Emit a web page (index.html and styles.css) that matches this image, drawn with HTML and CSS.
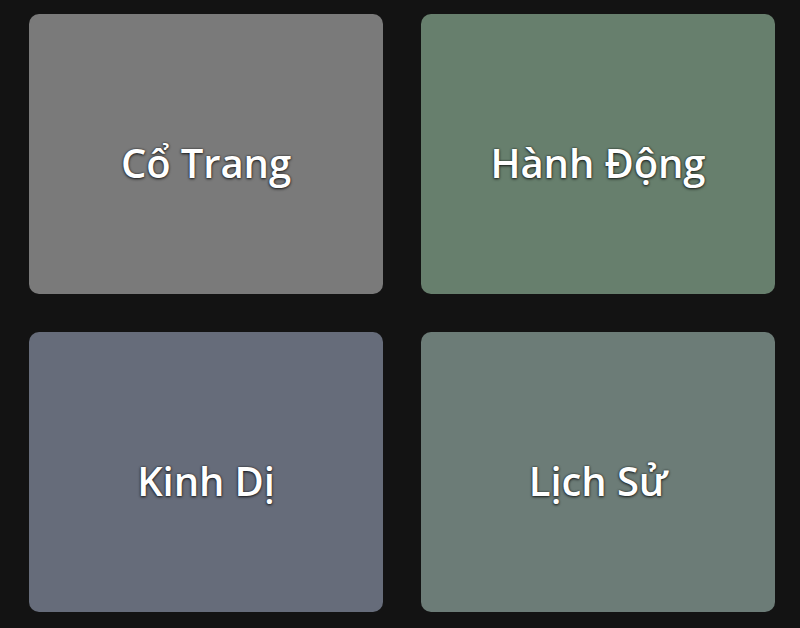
FILE: index.html
```html
<!DOCTYPE html>
<html lang="vi">
<head>
<meta charset="utf-8">
<title>Thể loại</title>
<link rel="stylesheet" href="styles.css">
</head>
<body>
<main class="grid">
  <div class="card card-gray"><span class="label">Cổ Trang</span></div>
  <div class="card card-green"><span class="label">Hành Động</span></div>
  <div class="card card-slate"><span class="label">Kinh Dị</span></div>
  <div class="card card-teal"><span class="label">Lịch Sử</span></div>
</main>
</body>
</html>
```
FILE: styles.css
```css
html, body {
  margin: 0;
  padding: 0;
  background: #131313;
  height: 100%;
}
.grid {
  display: grid;
  grid-template-columns: 354px 354px;
  grid-template-rows: 280px 280px;
  column-gap: 38px;
  row-gap: 38px;
  padding: 14px 0 0 29px;
}
.card {
  border-radius: 10px;
  display: flex;
  align-items: center;
  justify-content: center;
  padding-top: 17px;
  box-sizing: border-box;
}
.card-gray { background: #7a7a7a; }
.card-green { background: #677f6d; }
.card-slate { background: #666c7a; }
.card-teal { background: #6c7c77; }
.label {
  font-family: "Open Sans", "Noto Sans", sans-serif;
  font-weight: 600;
  font-size: 40px;
  color: #ffffff;
  text-shadow: 0 1px 3px rgba(0,0,0,0.75), 0 0 2px rgba(0,0,0,0.6);
  letter-spacing: -0.1px;
}
```
